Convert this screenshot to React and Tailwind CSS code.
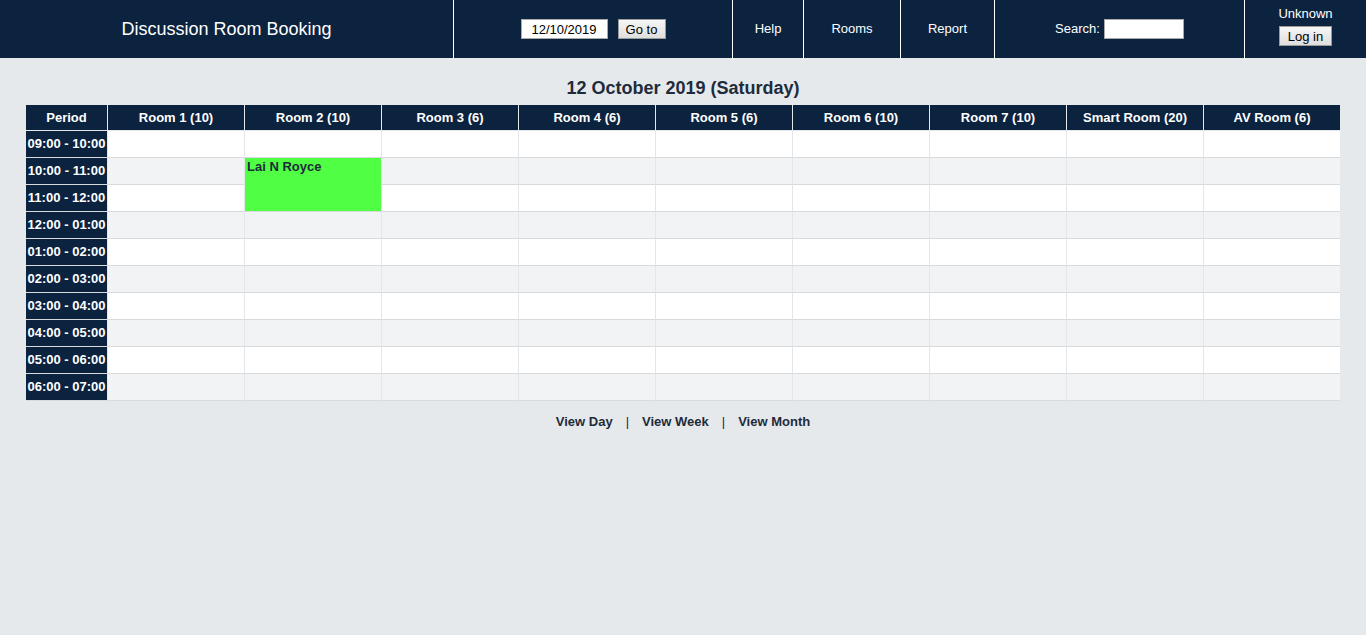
const rooms = [
  'Room 1 (10)',
  'Room 2 (10)',
  'Room 3 (6)',
  'Room 4 (6)',
  'Room 5 (6)',
  'Room 6 (10)',
  'Room 7 (10)',
  'Smart Room (20)',
  'AV Room (6)',
];

const periods = [
  '09:00 - 10:00',
  '10:00 - 11:00',
  '11:00 - 12:00',
  '12:00 - 01:00',
  '01:00 - 02:00',
  '02:00 - 03:00',
  '03:00 - 04:00',
  '04:00 - 05:00',
  '05:00 - 06:00',
  '06:00 - 07:00',
];

const font = { fontFamily: '"Liberation Sans", Arial, sans-serif' };

const Header = () => (
  <header className="flex h-[58px] bg-[#0c2340] text-white text-[13px]">
    <div className="w-[453px] flex items-center justify-center text-[18px]">
      Discussion Room Booking
    </div>
    <div className="w-[279px] border-l border-white flex items-center justify-center gap-[10px]">
      <input
        defaultValue="12/10/2019"
        className="w-[87px] h-[20px] bg-white text-black text-[13px] text-center border border-[#a9a9a9] outline-none"
        style={font}
      />
      <button
        className="w-[48px] h-[20px] text-black text-[13px] leading-none border border-[#9a9a9a] bg-gradient-to-b from-[#f6f6f6] to-[#dedede]"
        style={font}
      >
        Go to
      </button>
    </div>
    <div className="w-[71px] border-l border-white flex items-center justify-center">Help</div>
    <div className="w-[97px] border-l border-white flex items-center justify-center">Rooms</div>
    <div className="w-[94px] border-l border-white flex items-center justify-center">Report</div>
    <div className="w-[250px] border-l border-white flex items-center justify-center gap-[4px]">
      <span>Search:</span>
      <input className="w-[80px] h-[20px] bg-white border border-[#a9a9a9] outline-none" />
    </div>
    <div className="flex-1 border-l border-white flex flex-col items-center pt-[6px]">
      <span className="leading-[15px]">Unknown</span>
      <button
        className="mt-[5px] w-[53px] h-[20px] text-black text-[13px] leading-none border border-[#9a9a9a] bg-gradient-to-b from-[#f6f6f6] to-[#dedede]"
        style={font}
      >
        Log in
      </button>
    </div>
  </header>
);

const Timetable = () => (
  <div className="grid grid-cols-[82px_repeat(8,137px)_136px] grid-rows-[26px_repeat(10,27px)] text-[13px] font-bold">
    <div className="bg-[#0c2340] text-white flex items-center justify-center border-r border-b border-[#e4e7ea]">
      Period
    </div>
    {rooms.map((room, i) => (
      <div
        key={room}
        className={`bg-[#0c2340] text-white flex items-center justify-center border-b border-[#e4e7ea] ${i < rooms.length - 1 ? 'border-r' : ''}`}
      >
        {room}
      </div>
    ))}
    {periods.map((period, r) => {
      const bg = r % 2 === 0 ? 'bg-white' : 'bg-[#f2f3f5]';
      return [
        <div
          key={period}
          className="bg-[#0c2340] text-white flex items-center justify-center border-r border-r-[#e4e7ea] border-b border-b-[#d8dadd]"
        >
          {period}
        </div>,
        ...rooms.map((room, c) => {
          if (c === 1 && r === 1) {
            return (
              <div
                key={room + period}
                className="row-span-2 bg-[#50ff44] text-[#1e2b3b] pl-[2px] pt-[1px] leading-[16px] border-r border-r-[#e4e7ea] border-b border-b-[#d8dadd]"
              >
                Lai N Royce
              </div>
            );
          }
          if (c === 1 && r === 2) return null;
          return (
            <div
              key={room + period}
              className={`${bg} border-b border-b-[#d8dadd] ${c < rooms.length - 1 ? 'border-r border-r-[#e4e7ea]' : ''}`}
            />
          );
        }),
      ];
    })}
  </div>
);

export default function App() {
  return (
    <div className="min-h-screen bg-[#e6e9ec]" style={font}>
      <Header />
      <main className="px-[26px] text-[#1e2b3b]">
        <h1 className="pt-[20px] pb-[7px] leading-[20px] text-[18px] font-bold text-center">
          12 October 2019 (Saturday)
        </h1>
        <Timetable />
        <div className="mt-[13px] flex justify-center gap-[13px] text-[13px] font-bold leading-[16px]">
          <a href="#">View Day</a>
          <span className="font-normal">|</span>
          <a href="#">View Week</a>
          <span className="font-normal">|</span>
          <a href="#">View Month</a>
        </div>
      </main>
    </div>
  );
}
